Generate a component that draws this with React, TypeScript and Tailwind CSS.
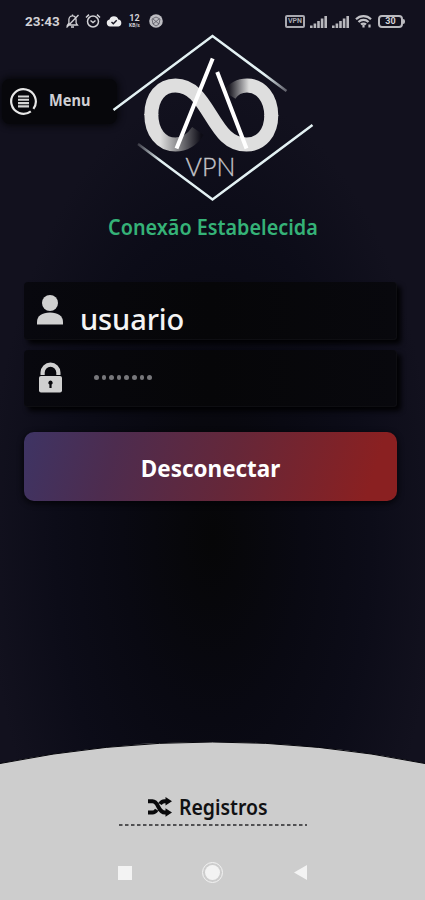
import type { ReactNode } from 'react'
import { clsx } from 'clsx'

function StatusBar() {
  return (
    <header className="flex h-[42px] items-center justify-between pl-[25px] pr-5 text-[#d2d2d6]">
      <div className="flex items-center">
        <span className="w-[35px] whitespace-nowrap font-[Roboto] text-[13.5px] font-bold">23:43</span>
        <svg className="ml-[5px]" width="15" height="16" viewBox="0 0 15 16" fill="none" stroke="currentColor" strokeWidth="1.3">
          <path d="M2.5 12h10l-1.4-2V6.500a3.600 3.600 0 0 0-7.200 0V10ZM6 14h3M7.500 3V1.500M1.500 14.500 13.500 2" />
        </svg>
        <svg className="ml-[5px]" width="16" height="16" viewBox="0 0 16 16" fill="none" stroke="currentColor" strokeWidth="1.5">
          <circle cx="8" cy="8.500" r="5.500" />
          <path d="m5.500 7.500 2.500 2 2.500-2M1 4.500 4 1.600M15 4.500 12 1.600" />
        </svg>
        <svg className="ml-[5px]" width="16" height="12" viewBox="0 0 16 12">
          <path fill="#ececee" d="M4 11.500a3.500 3.500 0 0 1-.5-6.900 4.600 4.600 0 0 1 8.800 0A3.500 3.500 0 0 1 12.500 11.500Z" />
          <path fill="none" stroke="#151421" strokeWidth="1.400" d="m5.500 7 1.800 1.800 3.400-3.500" />
        </svg>
        <span className="ml-[6px] flex w-[13px] flex-col items-center font-[Roboto] font-bold">
          <span className="text-[9px] leading-[9px]">12</span>
          <span className="text-[5px] leading-[5px]">KB/s</span>
        </span>
        <svg className="ml-[8px]" width="14" height="14" viewBox="0 0 14 14">
          <circle cx="7" cy="7" r="6.800" fill="#bdbdc2" />
          <path d="m3 5 4-2 4 2-1 5-3 2-3-2ZM4 5l6 5M10 5l-6 5" fill="none" stroke="#55545f" strokeWidth=".8" />
        </svg>
      </div>

      <div className="flex items-center">
        <span className="flex h-[13px] w-5 items-center justify-center rounded-[2px] border-2 border-[#a9a9b0] font-[Roboto] text-[7px] font-bold leading-none text-[#a9a9b0]">
          VPN
        </span>
        <Signal className="ml-[5px]" />
        <Signal className="ml-[5px]" />
        <svg className="ml-[6px]" width="17" height="14" viewBox="0 0 17 14" fill="none" stroke="#c2c2c7" strokeWidth="2.200">
          <path d="M1 5.200a10.800 10.800 0 0 1 15 0M3.500 8a7 7 0 0 1 10 0M6 10.600a3.500 3.500 0 0 1 5 0" />
          <path d="M8.500 11v2.500M14.500 10.500v3" />
        </svg>
        <span className="ml-[6px] flex h-[13px] w-[25px] items-center justify-center rounded-[4px] border-2 border-[#bababf] font-[Roboto] text-[9px] font-bold leading-none">
          30
        </span>
        <span className="h-[5px] w-[2px] rounded-r-sm bg-[#bababf]" />
      </div>
    </header>
  )
}

function Signal({ className }: { className?: string }) {
  return (
    <svg className={className} width="17" height="13" viewBox="0 0 17 13" fill="#b8b8bd">
      <path d="M0 10.500h2.600V13H0zM3.600 8.500h2.600V13H3.600zM7.200 6h2.600v7H7.200zM10.800 3.500h2.600V13h-2.600zM14.400 1H17v12h-2.600z" />
    </svg>
  )
}

function Logo() {
  return (
    <svg className="absolute left-[105px] top-[30px]" width="215" height="175" viewBox="105 30 215 175" fill="none">
      <defs>
        <linearGradient id="tailLeft" gradientUnits="userSpaceOnUse" x1="160" y1="0" x2="201" y2="0">
          <stop stopColor="#dedede" />
          <stop offset=".35" stopColor="#9a9a9c" />
          <stop offset="1" stopColor="#0d0c16" />
        </linearGradient>
        <linearGradient id="tailRight" gradientUnits="userSpaceOnUse" x1="229" y1="0" x2="249" y2="0">
          <stop stopColor="#1b1a23" />
          <stop offset="1" stopColor="#dedede" />
        </linearGradient>
        <linearGradient id="edgeTop" gradientUnits="userSpaceOnUse" x1="265" y1="0" x2="288" y2="0">
          <stop stopColor="#e3f1f3" />
          <stop offset="1" stopColor="#55545f" />
        </linearGradient>
        <linearGradient id="edgeBottom" gradientUnits="userSpaceOnUse" x1="137" y1="0" x2="160" y2="0">
          <stop stopColor="#33323d" />
          <stop offset="1" stopColor="#e3f1f3" />
        </linearGradient>
      </defs>
      <path d="M113.500 110 212.500 36 286.500 91" stroke="url(#edgeTop)" strokeWidth="2.500" />
      <path d="M138 144 212.500 199.500 312.500 125" stroke="url(#edgeBottom)" strokeWidth="2.500" />
      <path d="M151.300 114C151.300 132 161 144.500 175.500 144.500 184 144.500 192 140 198 131" stroke="url(#tailLeft)" strokeWidth="14" />
      <path d="M229.500 95C234 88 240 85.500 247 85.500 261 85.500 271.300 98 271.300 116" stroke="url(#tailRight)" strokeWidth="14" />
      <path
        d="M151.300 115C151.300 97 161 85.500 175.500 85.500 192 85.500 200.500 99 210.500 115 221 132 229 144.500 246.500 144.500 261 144.500 271.300 133 271.300 115"
        stroke="#dedede"
        strokeWidth="14"
      />
      <path d="M212.700 58.500 176.500 148.500M217.200 72 246.500 148.500" stroke="#fff" strokeWidth="4" />
      <text
        x="185.500"
        y="175.700"
        textLength="50"
        className="fill-[#c4c4c8] stroke-[#c4c4c8] font-[Lato] text-[25px] font-light"
        strokeWidth=".3"
      >
        VPN
      </text>
    </svg>
  )
}

function MenuButton() {
  return (
    <button className="ml-[2px] mt-[37px] flex h-[45px] w-[115px] items-center rounded-[8px] bg-[#07070b] pl-[8px] shadow-[0_0_6px_2px_#07070b]">
      <svg width="27" height="27" viewBox="0 0 27 27" fill="none">
        <path d="M20.800 23.400A12.300 12.300 0 1 1 23.400 20.800" stroke="#e8e8e8" strokeWidth="2.200" />
        <path d="M8 8.500h11M8 11.800h11M8 15.100h11M8 18.400h11" stroke="#d6d6d6" strokeWidth="2.100" />
      </svg>
      <span className="mb-[3px] ml-3 origin-left scale-x-[0.91] text-[16px] font-bold leading-none text-[#cfcfd3]">Menu</span>
    </button>
  )
}

function Field({ className, children }: { className?: string, children: ReactNode }) {
  return (
    <div
      className={clsx(
        'flex rounded-[4px] border-b border-r border-[#0e0e12] bg-[linear-gradient(90deg,#08080e,#060608_50%,#08080d)] shadow-[4px_4px_5px_#020204]',
        className,
      )}
    >
      {children}
    </div>
  )
}

export default function App() {
  return (
    <div
      className={`
        relative flex h-[900px] w-[425px] flex-col overflow-hidden
        bg-[radial-gradient(ellipse_225px_450px_at_50%_60%,#060607_0%,#090912_40%,#0c0c18_70%,#12111e_100%)]
        font-['Noto_Sans','Open_Sans',sans-serif]
      `}
    >
      <StatusBar />
      <MenuButton />
      <Logo />

      <h1 className="mt-[88px] text-center text-[21.5px] font-semibold leading-[30px] text-[#35b277]">
        <span className="inline-block origin-center scale-x-[0.92] whitespace-nowrap">Conexão Estabelecida</span>
      </h1>

      <main className="mt-10 flex flex-col pl-6 pr-7">
        <Field className="h-[58px]">
          <svg className="ml-[13px] mt-[13px] shrink-0" width="26" height="30" viewBox="0 0 26 30" fill="#d0d0d0">
            <circle cx="13" cy="8" r="8" />
            <path d="M0 29.500v-2.500C0 21 5 17.500 13 17.500S26 21 26 27v2.500Z" />
          </svg>
          <span className="ml-[17px] mt-[19px] text-[29px] font-medium leading-[36px] tracking-[-0.1px] text-[#f4f4f4]">usuario</span>
        </Field>
        <Field className="mt-[10px] h-[57px]">
          <svg className="ml-[15px] mt-[12px] shrink-0" width="23" height="31" viewBox="0 0 23 31">
            <path d="M3.600 13v-2.500a7.900 7.900 0 0 1 15.800 0V13" fill="none" stroke="#d0d0d0" strokeWidth="4.200" />
            <rect y="14" width="23" height="16.500" rx="2" fill="#d0d0d0" />
            <path d="M11.500 18.500a2.200 2.200 0 0 1 1.100 4.100V26h-2.200v-3.400a2.200 2.200 0 0 1 1.100-4.100" fill="#08080c" />
          </svg>
          <div className="ml-[32px] mt-[25px] flex gap-[3px]">
            {Array.from({ length: 8 }, (_, i) => (
              <span key={i} className="size-[4.600px] rounded-full bg-[#77777b]" />
            ))}
          </div>
        </Field>
        <button
          className={`
            mt-[25px] h-[69px] rounded-[10px]
            bg-[linear-gradient(107deg,#3e3464_0%,#4d2c4f_24%,#652739_55%,#8a2021_92%)]
            pt-[3px] text-[24px] font-bold text-white shadow-[0_2px_6px_#030306]
          `}
        >
          <span className="inline-block scale-x-[0.935]">Desconectar</span>
        </button>
      </main>

      <footer className="relative mt-auto flex h-[158px] flex-col items-center">
        <svg className="absolute inset-0" width="425" height="158" viewBox="0 0 425 158">
          <path d="M0 21.500Q212.500-21.500 425 21.500V158H0Z" fill="#cdcdcd" />
          <path d="M0 21.500Q212.500-21.500 425 21.500" fill="none" stroke="#05050a" strokeWidth="1" />
        </svg>
        <div className="relative mt-[50px] flex h-[34px] w-[188px] items-start justify-center pr-2">
          <svg className="mr-[6px] mt-[5px]" width="25" height="20" viewBox="0 0 25 20">
            <path
              d="M0 4.200h4.500C11 4.200 9.500 15.500 17 15.500H19M0 15.500h4.500c2 0 3.200-1.200 4.200-2.800M12 7c1-1.700 2.300-2.800 4.500-2.800H19"
              fill="none"
              stroke="#09090b"
              strokeWidth="4"
            />
            <path d="m17.500 0 6.500 4.200-6.500 4.300ZM17.500 11.300l6.500 4.200-6.500 4.300Z" fill="#09090b" />
          </svg>
          <span className="mr-[2px] w-[89px] origin-left scale-x-[0.925] text-[21px] font-semibold leading-[31px] text-[#111113]">Registros</span>
          <svg className="absolute bottom-0 left-0" width="188" height="2">
            <path d="M0 1h188" stroke="#29292b" strokeWidth="1.600" strokeDasharray="3.500 2.500" />
          </svg>
        </div>
        <nav className="relative mt-[36px] flex w-[190px] items-center justify-between">
          <span className="size-[14px] bg-[#f3f3f3]" />
          <span className="flex size-[21px] items-center justify-center rounded-full border border-[#f3f3f3]">
            <span className="size-[15px] rounded-full bg-[#f3f3f3]" />
          </span>
          <svg width="14" height="15" viewBox="0 0 14 15" fill="#f3f3f3">
            <path d="M0 7.500 13 0v15Z" />
          </svg>
        </nav>
      </footer>
    </div>
  )
}
